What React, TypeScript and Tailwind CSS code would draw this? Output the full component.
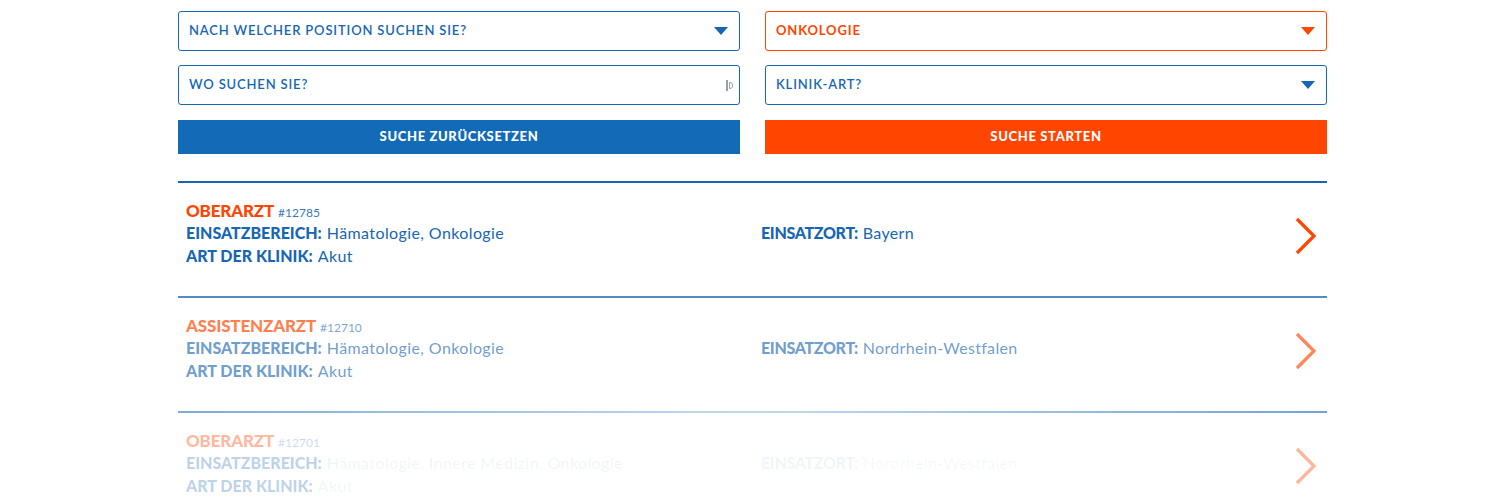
import React from 'react'

const BLUE = 'text-[#1766b3]'

type Job = {
  title: string
  id: string
  bereich: string
  art: string
  ort: string
}

const jobs: Job[] = [
  { title: 'OBERARZT', id: '#12785', bereich: 'Hämatologie, Onkologie', art: 'Akut', ort: 'Bayern' },
  { title: 'ASSISTENZARZT', id: '#12710', bereich: 'Hämatologie, Onkologie', art: 'Akut', ort: 'Nordrhein-Westfalen' },
  { title: 'OBERARZT', id: '#12701', bereich: 'Hämatologie, Innere Medizin, Onkologie', art: 'Akut', ort: 'Nordrhein-Westfalen' },
]

function Caret({ color }: { color: string }) {
  return (
    <svg width="14" height="8" viewBox="0 0 14 8" className={color}>
      <path d="M0 0h14L7 8z" fill="currentColor" />
    </svg>
  )
}

function Chevron({ className }: { className: string }) {
  return (
    <svg width="22" height="38" viewBox="0 0 22 38" className={'mt-[6px] ' + className}>
      <path d="M2 2l17 17L2 36" fill="none" stroke="currentColor" strokeWidth="3.2" />
    </svg>
  )
}

function Field({ label, active, icon }: { label: string; active?: boolean; icon?: 'caret' | 'pass' }) {
  return (
    <div
      className={
        'h-10 flex items-center justify-between rounded-[3px] border bg-white pl-[10px] pr-[11px] ' +
        (active ? 'border-[#ff4500]' : 'border-[#1766b3]')
      }
    >
      <span
        className={
          'text-[13px] tracking-[0.065em] ' + (active ? 'font-bold text-[#ff4500]' : 'font-semibold ' + BLUE)
        }
      >
        {label}
      </span>
      {icon === 'caret' && <Caret color={active ? 'text-[#ff4500]' : 'text-[#1766b3]'} />}
      {icon === 'pass' && (
        <span className="flex items-center gap-[1px] mr-[-5px]">
          <span className="w-[2px] h-[11px] bg-gray-400" />
          <span className="w-[4px] h-[7px] rounded-r-[3px] border border-gray-400" />
        </span>
      )}
    </div>
  )
}

function JobRow({ job, idx }: { job: Job; idx: number }) {
  const faded = idx === 1
  const last = idx === 2
  const title = last ? 'text-[#ff4500]/40' : faded ? 'text-[#ff4500]/70' : 'text-[#ff4500]'
  const idCls = last ? 'text-[#1766b3]/25' : faded ? 'text-[#1766b3]/60' : 'text-[#1766b3]/90'
  const label = last ? 'text-[#1766b3]/30' : faded ? 'text-[#1766b3]/65' : BLUE
  const value = last ? 'text-[#1766b3]/[0.08]' : faded ? 'text-[#1766b3]/65' : BLUE
  const right = last ? 'text-[#1766b3]/[0.07]' : faded ? 'text-[#1766b3]/65' : BLUE
  const rightVal = last ? 'text-[#1766b3]/[0.06]' : faded ? 'text-[#1766b3]/65' : BLUE
  const chev = last ? 'text-[#ff4500]/40' : faded ? 'text-[#ff4500]/65' : 'text-[#ff4500]'
  const divider = last
    ? 'bg-gradient-to-r from-[#1766b3]/55 via-[#1766b3]/25 to-[#1766b3]/60'
    : faded
      ? 'bg-[#1766b3]/75'
      : 'bg-[#1766b3]'

  return (
    <div>
      <div className={'h-[2px] ' + divider} />
      <div className="flex items-center pl-2 pr-[10px] pt-[15px] pb-[28px]">
        <div className="w-[575px] flex flex-col">
          <div className="h-[23px] flex items-baseline">
            <span className={'text-[17px] font-black tracking-[-0.01em] ' + title}>{job.title}</span>
            <span className={'ml-[4px] text-[12px] ' + idCls}>{job.id}</span>
          </div>
          <div className="h-[23px] flex items-baseline text-[16px]">
            <span className={'font-black ' + label}>EINSATZBEREICH:</span>
            <span className={'ml-[5px] font-normal tracking-[0.025em] ' + value}>{job.bereich}</span>
          </div>
          <div className="h-[24px] flex items-baseline text-[16px]">
            <span className={'font-black ' + label}>ART DER KLINIK:</span>
            <span className={'ml-[5px] font-normal tracking-[0.025em] ' + value}>{job.art}</span>
          </div>
        </div>
        <div className="flex-1 flex items-baseline text-[16px]">
          <span className={'font-black tracking-[-0.02em] ' + right}>EINSATZORT:</span>
          <span className={'ml-[5px] font-normal tracking-[0.02em] ' + rightVal}>{job.ort}</span>
        </div>
        <Chevron className={chev} />
      </div>
    </div>
  )
}

export default function App() {
  return (
    <div className="w-[1500px] h-[500px] overflow-hidden bg-white font-['Lato',sans-serif]">
      <div className="ml-[178px] w-[1149px] pt-[11px]">
        <div className="grid grid-cols-2 gap-x-[25px]">
          <div className="flex flex-col">
            <Field label="NACH WELCHER POSITION SUCHEN SIE?" icon="caret" />
            <div className="mt-[14px]">
              <Field label="WO SUCHEN SIE?" icon="pass" />
            </div>
            <button className="mt-[15px] h-[34px] bg-[#136bb8] text-white text-[13px] font-black tracking-[0.05em]">
              SUCHE ZURÜCKSETZEN
            </button>
          </div>
          <div className="flex flex-col">
            <Field label="ONKOLOGIE" icon="caret" active />
            <div className="mt-[14px]">
              <Field label="KLINIK-ART?" icon="caret" />
            </div>
            <button className="mt-[15px] h-[34px] bg-[#ff4500] text-white text-[13px] font-black tracking-[0.05em]">
              SUCHE STARTEN
            </button>
          </div>
        </div>
        <div className="mt-[27px]">
          {jobs.map((j, i) => (
            <JobRow key={i} job={j} idx={i} />
          ))}
        </div>
      </div>
    </div>
  )
}
